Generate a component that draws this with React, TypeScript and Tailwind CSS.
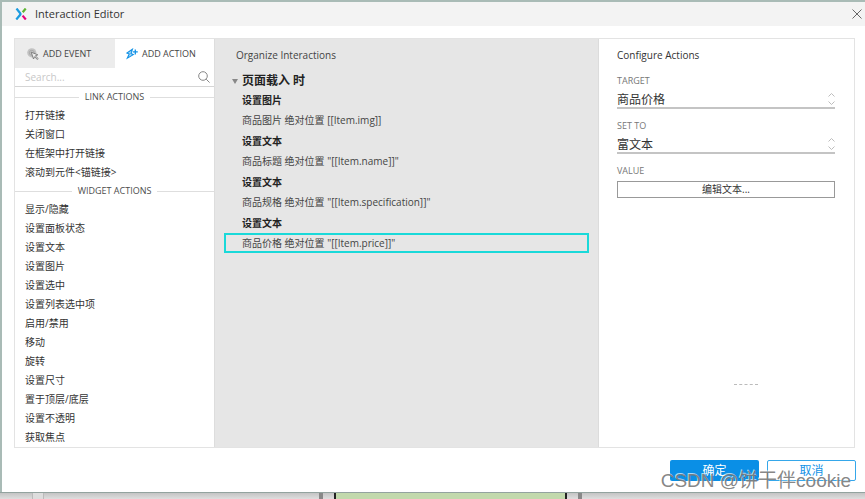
import React from 'react';

const linkActions = ['打开链接', '关闭窗口', '在框架中打开链接', '滚动到元件<锚链接>'];

const widgetActions = [
  '显示/隐藏',
  '设置面板状态',
  '设置文本',
  '设置图片',
  '设置选中',
  '设置列表选中项',
  '启用/禁用',
  '移动',
  '旋转',
  '设置尺寸',
  '置于顶层/底层',
  '设置不透明',
  '获取焦点',
];

const interactions = [
  { action: '设置图片', detail: '商品图片 绝对位置 [[Item.img]]', selected: false },
  { action: '设置文本', detail: '商品标题 绝对位置 "[[Item.name]]"', selected: false },
  { action: '设置文本', detail: '商品规格 绝对位置 "[[Item.specification]]"', selected: false },
  { action: '设置文本', detail: '商品价格 绝对位置 "[[Item.price]]"', selected: true },
];

const Logo = () => (
  <svg className="h-3 w-3" viewBox="0 0 12 12" fill="none" strokeWidth="2.2">
    <path d="M1.5.5L5.200 5.200Q5.800 6 5.200 6.800L1.300 11.500" stroke="#1a9be0" />
    <path d="M10.700.5L7.700 4.300" stroke="#5cb531" />
    <path d="M7.600 7.600L10.800 11.500" stroke="#e6007e" />
  </svg>
);

const EventIcon = () => (
  <svg className="h-3 w-3" viewBox="0 0 12 12">
    <circle cx="4.800" cy="4.800" r="4.600" fill="#c2c2c2" />
    <circle cx="4.800" cy="4.800" r="2.500" fill="none" stroke="#a5a5a5" strokeWidth=".8" />
    <path d="M4.200 4.200l6.600 2.600-2.400 1.100 2.800 2.700-.9.900-2.700-2.800-1.100 2.300z" fill="#ededed" stroke="#777" strokeWidth=".9" />
  </svg>
);

const ActionIcon = () => (
  <svg className="h-3 w-3" viewBox="0 0 12 12" fill="none" stroke="#1292e6" strokeWidth="1.100">
    <path d="M6.400 1.300L.9 5.100l2.300.9-1.900 4.200L7.300 6.600 5 5.600z" fill="#a9d8f8" />
    <path d="M9.300 1.400v5M6.800 3.900h5" strokeWidth="1.300" />
  </svg>
);

const SectionTitle = ({ children }: { children: React.ReactNode }) => (
  <div className="flex h-[18px] items-center gap-[6px] text-[9px] text-[#4d4d4d]">
    <span className="h-px flex-1 bg-[#dedede]" />
    <h3>{children}</h3>
    <span className="h-px flex-1 bg-[#dedede]" />
  </div>
);

const ActionList = ({ items }: { items: string[] }) => (
  <ul>
    {items.map((item) => (
      <li key={item}>
        <button className="block h-[19px] w-full pl-[10px] text-left text-[10px] leading-[19px] text-[#333]">{item}</button>
      </li>
    ))}
  </ul>
);

const SelectField = ({ id, label, value }: { id: string; label: string; value: string }) => (
  <div className="mb-[9px]">
    <label htmlFor={id} className="block h-4 text-[9px] leading-4 text-[#777]">
      {label}
    </label>
    <div className="relative">
      <select id={id} defaultValue={value} className="block h-5 w-full appearance-none border-b-2 border-[#c4c4c4] bg-transparent pt-[3px] text-[12px] leading-[15px] text-[#333]">
        <option>{value}</option>
      </select>
      <svg className="pointer-events-none absolute right-0 top-1 h-3 w-[7px]" viewBox="0 0 7 12" fill="none" stroke="#bdbdbd">
        <path d="M.5 3.500l3-3 3 3M.5 8.500l3 3 3-3" />
      </svg>
    </div>
  </div>
);

export default function App() {
  return (
    <div className="relative flex h-screen flex-col overflow-hidden bg-[#a9bbb6] pl-[2px] pt-[2px] font-['Open_Sans','Noto_Sans_CJK_SC',sans-serif]">
      <main className="flex min-h-0 flex-1 flex-col bg-white">
        <header className="flex h-6 shrink-0 items-center bg-[#f3f3f3] pl-[13px] pr-[3px]">
          <Logo />
          <h1 className="ml-2 flex-1 text-[11px] text-[#333]">Interaction Editor</h1>
          <button aria-label="Close">
            <svg className="h-[10px] w-[10px]" viewBox="0 0 10 10" stroke="#666">
              <path d="M.5.5l9 9M9.500.5l-9 9" />
            </svg>
          </button>
        </header>

        <div className="ml-3 mr-[10px] mt-3 flex min-h-0 flex-1 border border-[#e3e3e3]">
          {/* Actions */}
          <section className="flex w-[200px] shrink-0 flex-col overflow-hidden border-r border-[#ddd]">
            <div className="flex h-[29px] shrink-0 text-[9px] text-[#444]">
              <button className="flex w-[100px] items-center gap-1 bg-[#ececec] pl-3">
                <EventIcon />
                ADD EVENT
              </button>
              <button className="flex flex-1 items-center gap-1 pl-[11px]">
                <ActionIcon />
                ADD ACTION
              </button>
            </div>
            <div className="flex h-[19px] shrink-0 items-center border-b border-[#d5d5d5] pl-[10px] pr-1">
              <input aria-label="Search" placeholder="Search..." className="min-w-0 flex-1 bg-transparent text-[10px] outline-none placeholder:text-[#c8c8c8]" />
              <svg className="h-3 w-3" viewBox="0 0 12 12" fill="none" stroke="#888">
                <circle cx="5" cy="5" r="4.300" />
                <path d="M8.200 8.200l3.400 3.400" />
              </svg>
            </div>
            <div className="pt-px">
              <SectionTitle>LINK ACTIONS</SectionTitle>
              <ActionList items={linkActions} />
              <SectionTitle>WIDGET ACTIONS</SectionTitle>
              <ActionList items={widgetActions} />
            </div>
          </section>

          {/* Interactions */}
          <section className="min-w-0 flex-1 border-r border-[#dcdcdc] bg-[#e6e6e6] pl-[9px] pr-[9px] pt-2">
            <h2 className="pl-3 text-[10px] leading-4 text-[#444]">Organize Interactions</h2>
            <h3 className="mt-2 flex h-5 items-center gap-1 pl-2 text-[12px] font-bold text-[#222]">
              <svg className="h-[5px] w-[6px]" viewBox="0 0 6 5" fill="#888">
                <path d="M0 0h6L3 5z" />
              </svg>
              页面载入 时
            </h3>
            <ul className="text-[10px]">
              {interactions.map((item, index) => (
                <li key={index} className="mb-[2px]">
                  <h4 className="h-[19px] pl-[18px] font-bold leading-[19px] text-[#222]">{item.action}</h4>
                  <button
                    className={`flex h-5 w-full items-center border-2 pl-4 text-left leading-4 text-[#444] ${
                      item.selected ? 'border-[#1ad9d9]' : 'border-transparent'
                    }`}
                  >
                    {item.detail}
                  </button>
                </li>
              ))}
            </ul>
          </section>

          {/* Configuration */}
          <section className="flex w-[255px] shrink-0 flex-col pl-[18px] pr-[19px] pt-2">
            <h2 className="mb-[10px] text-[10px] leading-4 text-[#333]">Configure Actions</h2>
            <SelectField id="target" label="TARGET" value="商品价格" />
            <SelectField id="set-to" label="SET TO" value="富文本" />
            <label htmlFor="value" className="block h-4 text-[9px] leading-4 text-[#777]">
              VALUE
            </label>
            <button id="value" className="mt-[2px] h-[17px] w-full border border-[#999] text-[10px] leading-[15px] text-[#333]">
              编辑文本...
            </button>
            <div className="mb-[62px] ml-[117px] mt-auto w-6 border-t border-dashed border-[#bbb]" />
          </section>
        </div>

        <footer className="flex h-[44px] shrink-0 justify-end gap-2 pr-[9px] pt-3 text-[12px] leading-[19px]">
          <button className="h-[21px] w-[89px] rounded-xs bg-[#0a8fe6] text-white">确定</button>
          <button className="h-[21px] w-[89px] rounded-xs border border-[#35a7ea] text-[#1292e6]">取消</button>
        </footer>
      </main>

      {/* Canvas edge below the dialog */}
      <div className="-ml-[2px] flex h-[7px] shrink-0 border-t border-[#93a39f] bg-gradient-to-b from-[#c4c4c4] to-[#dedede]">
        <div className="w-8" />
        <div className="w-3 border-x border-[#bbb] bg-[#ddd]" />
        <div className="w-[275px]" />
        <div className="w-1 bg-[#888]" />
        <div className="w-[11px]" />
        <div className="w-[233px] border-x-2 border-[#222] bg-[#c2d9ac]" />
        <div className="w-[11px]" />
        <div className="w-1 bg-[#888]" />
      </div>

      <p className="pointer-events-none absolute bottom-[4px] right-[14px] whitespace-nowrap font-['Liberation_Sans','Noto_Sans_CJK_SC',sans-serif] text-[19px] leading-7 text-[#777]/90 [text-shadow:-1px_-1px_0_#ffffffaa]">
        CSDN @饼干伴cookie
      </p>
    </div>
  );
}
